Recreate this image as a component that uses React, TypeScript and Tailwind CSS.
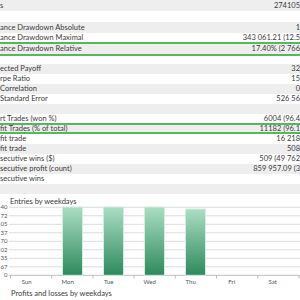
import React from "react";

type Row = { label: string; value: string; h: string; gray: boolean; hl?: boolean };

const rows: Row[] = [
  { label: "s", value: "274105", h: "h-[11px]", gray: true },
  { label: "", value: "", h: "h-[11px]", gray: false },
  { label: "ance Drawdown Absolute", value: "1", h: "h-[11px]", gray: true },
  { label: "ance Drawdown Maximal", value: "343 061.21 (12.5", h: "h-[9px]", gray: false },
  { label: "ance Drawdown Relative", value: "17.40% (2 766", h: "h-[14px]", gray: true, hl: true },
  { label: "", value: "", h: "h-[8px]", gray: false },
  { label: "ected Payoff", value: "32", h: "h-[10px]", gray: true },
  { label: "rpe Ratio", value: "15", h: "h-[10px]", gray: false },
  { label: "Correlation", value: "0", h: "h-[10px]", gray: true },
  { label: "Standard Error", value: "526 56", h: "h-[10px]", gray: false },
  { label: "", value: "", h: "h-[10px]", gray: true },
  { label: "rt Trades (won %)", value: "6004 (96.4", h: "h-[9px]", gray: false },
  { label: "fit Trades (% of total)", value: "11182 (96.1", h: "h-[11px]", gray: true, hl: true },
  { label: "fit trade", value: "16 218", h: "h-[10px]", gray: false },
  { label: "fit trade", value: "508", h: "h-[10px]", gray: true },
  { label: "secutive wins ($)", value: "509 (49 762", h: "h-[10px]", gray: false },
  { label: "secutive profit (count)", value: "859 957.09 (3", h: "h-[10px]", gray: true },
  { label: "secutive wins", value: "", h: "h-[10px]", gray: false },
  { label: "", value: "", h: "h-[10px]", gray: true },
];

const yLabels = ["40", "72", "05", "37", "70", "02", "35", "67", "0"];
const days = ["Sun", "Mon", "Tue", "Wed", "Thu", "Fri", "Sat"];
const bars = [
  { x: 62, top: 3 },
  { x: 103, top: 3 },
  { x: 144, top: 3 },
  { x: 185, top: 5 },
];

const EntriesChart = () => (
  <svg width="300" height="84" className="block">
    <defs>
      <linearGradient id="barFill" x1="0" y1="0" x2="0" y2="1">
        <stop offset="0" stopColor="#abdec4" />
        <stop offset="1" stopColor="#2d8a5b" />
      </linearGradient>
    </defs>
    {yLabels.map((l, i) => {
      const y = 3.3 + i * 8.5;
      return (
        <g key={i}>
          <line x1="9" x2="300" y1={y} y2={y} stroke={i === 8 ? "#bdbdbd" : "#dcdcdc"} strokeWidth="1" />
          <text x="7.5" y={y + 2} fontSize="6" fill="#555" textAnchor="end" fontFamily="Lato, sans-serif">
            {l}
          </text>
        </g>
      );
    })}
    {bars.map((b, i) => (
      <rect key={i} x={b.x + 0.5} y={b.top} width="20" height={71.3 - b.top} fill="url(#barFill)" stroke="#d3eee0" strokeWidth="1" />
    ))}
    {Array.from({ length: 8 }).map((_, k) => {
      const x = 10.5 + k * 41.2;
      return <line key={k} x1={x} x2={x} y1="71.3" y2="74.5" stroke="#bdbdbd" strokeWidth="1" />;
    })}
    {days.map((d, k) => (
      <text key={d} x={26.7 + k * 41} y="80" fontSize="6" fill="#555" textAnchor="middle" fontFamily="Lato, sans-serif">
        {d}
      </text>
    ))}
  </svg>
);

export default function App() {
  return (
    <div className="w-[300px] h-[300px] overflow-hidden bg-white text-[#3a3a3a] font-['Lato',sans-serif]">
      {/* Results table */}
      <div className="flex flex-col">
        {rows.map((r, i) => (
          <div
            key={i}
            className={`${r.h} flex items-center justify-between whitespace-nowrap text-[7.5px] leading-none ${
              r.gray ? "bg-[#eeeeee]" : "bg-white"
            } ${r.hl ? "border-y-2 border-[#55b85e]" : ""}`}
          >
            <span>{r.label}</span>
            <span>{r.value}</span>
          </div>
        ))}
      </div>

      {/* Entries by weekdays */}
      <div className="h-[10px] pl-[10px] pt-[4px] text-[7.5px] leading-none whitespace-nowrap">Entries by weekdays</div>
      <EntriesChart />
      <div className="h-[12px] pl-[11px] pt-[2px] text-[7.5px] leading-none whitespace-nowrap">Profits and losses by weekdays</div>
    </div>
  );
}
